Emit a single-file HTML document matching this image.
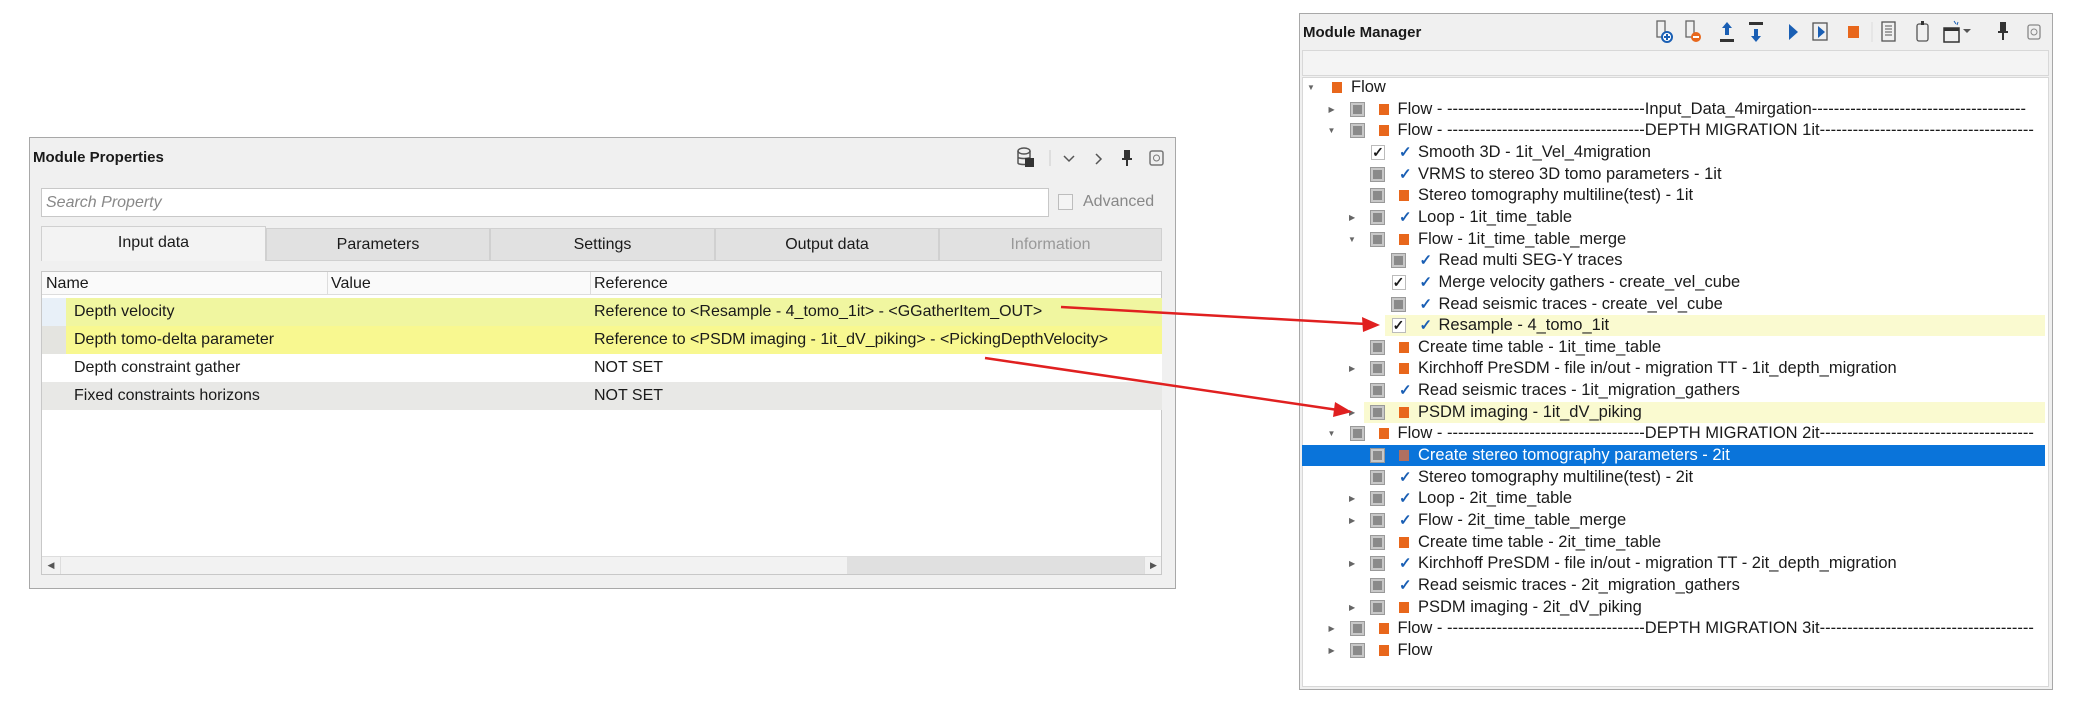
<!DOCTYPE html>
<html><head><meta charset="utf-8"><style>
*{box-sizing:border-box;margin:0;padding:0}
body{width:2076px;height:716px;background:#fff;position:relative;overflow:hidden;font-family:"Liberation Sans",sans-serif;font-size:16px;color:#1a1a1a}
.a{position:absolute}
.panel{background:#f0f0f0;border:1px solid #a8a8a8}
.tab{position:absolute;top:228px;height:33px;background:#e1e1e1;border:1px solid #d0d0d0;text-align:center;line-height:31px;font-size:16px}
.row{position:absolute;left:42px;width:1120px;height:28px;line-height:28px}
.tr{position:absolute;height:21.65px;line-height:21.65px;white-space:nowrap;font-size:16.5px}
.cb{position:absolute;width:13px;height:13px;background:#8a8a8a;border:2px solid #c8c8c8;outline:1px solid #999;top:4px}
.cbk{position:absolute;width:14px;height:15px;background:#fff;border:1px solid #bbb;top:3px;font-size:14px;line-height:13px;text-align:center;font-weight:bold}
.or{position:absolute;width:10px;height:11px;background:#e8671c;top:5px}
.bc{position:absolute;color:#1a5fb4;font-weight:bold;font-size:15px;top:0}
.ex{position:absolute;font-size:8px;color:#666;top:0}
</style></head><body>

<div class="a panel" style="left:29px;top:137px;width:1147px;height:452px"></div>
<div class="a" style="left:33px;top:149px;font-weight:bold;font-size:15px">Module Properties</div>
<svg class="a" style="left:1016px;top:146px" width="170" height="26">
<ellipse cx="8" cy="5" rx="6" ry="3" fill="none" stroke="#555" stroke-width="1.5"/>
<path d="M2 5v12c0 2 12 2 12 0V5M2 11c0 2 12 2 12 0" fill="none" stroke="#555" stroke-width="1.5"/>
<rect x="9" y="12" width="9" height="9" fill="#333"/>
<line x1="34" y1="4" x2="34" y2="20" stroke="#ccc"/>
<path d="M48 10l5 5 5-5" fill="none" stroke="#555" stroke-width="1.5"/>
<path d="M80 8l5 5-5 5" fill="none" stroke="#555" stroke-width="1.5"/>
<path d="M108 4h6v8h2v2h-4v6h-2v-6h-4v-2h2z" fill="#333"/>
<rect x="134" y="5" width="13" height="14" rx="2" fill="none" stroke="#777" stroke-width="1.5"/><circle cx="140.5" cy="12" r="3" fill="none" stroke="#777"/>
</svg>
<div class="a" style="left:41px;top:188px;width:1008px;height:29px;background:#fff;border:1px solid #c8c8c8;padding-left:4px;line-height:27px;font-style:italic;color:#888">Search Property</div>
<div class="a" style="left:1058px;top:194px;width:15px;height:16px;border:1px solid #bdbdbd;background:#f4f4f4"></div>
<div class="a" style="left:1083px;top:193px;color:#888">Advanced</div>
<div class="tab" style="left:41px;width:225px;background:#f3f3f3;border-bottom:none;top:226px;height:35px">Input data</div>
<div class="tab" style="left:266px;width:224px">Parameters</div>
<div class="tab" style="left:490px;width:225px">Settings</div>
<div class="tab" style="left:715px;width:224px">Output data</div>
<div class="tab" style="left:939px;width:223px;color:#999">Information</div>
<div class="a" style="left:41px;top:271px;width:1121px;height:304px;background:#fff;border:1px solid #c8c8c8"></div>
<div class="a" style="left:42px;top:272px;width:1119px;height:23px;background:#fafafa;border-bottom:1px solid #ddd"></div>
<div class="a" style="left:46px;top:275px">Name</div>
<div class="a" style="left:327px;top:272px;width:1px;height:23px;background:#ddd"></div>
<div class="a" style="left:331px;top:275px">Value</div>
<div class="a" style="left:590px;top:272px;width:1px;height:23px;background:#ddd"></div>
<div class="a" style="left:594px;top:275px">Reference</div>
<div class="row" style="top:298px;background:#f0f6a0"><div class="a" style="left:0;top:0;width:24px;height:28px;background:#e8f0f8"></div><span class="a" style="left:32px">Depth velocity</span><span class="a" style="left:552px">Reference to &lt;Resample - 4_tomo_1it&gt; - &lt;GGatherItem_OUT&gt;</span></div>
<div class="row" style="top:326px;background:#f8f890"><div class="a" style="left:0;top:0;width:24px;height:28px;background:#e4e4e0"></div><span class="a" style="left:32px">Depth tomo-delta parameter</span><span class="a" style="left:552px">Reference to &lt;PSDM imaging - 1it_dV_piking&gt; - &lt;PickingDepthVelocity&gt;</span></div>
<div class="row" style="top:354px;background:#fff"><span class="a" style="left:32px">Depth constraint gather</span><span class="a" style="left:552px">NOT SET</span></div>
<div class="row" style="top:382px;background:#e8e8e6"><span class="a" style="left:32px">Fixed constraints horizons</span><span class="a" style="left:552px">NOT SET</span></div>
<div class="a" style="left:42px;top:556px;width:1119px;height:18px;background:#f2f2f2;border-top:1px solid #ddd"></div>
<div class="a" style="left:42px;top:556px;width:19px;height:18px;border-right:1px solid #ddd;font-size:9px;line-height:18px;text-align:center;color:#555">◀</div>
<div class="a" style="left:847px;top:557px;width:297px;height:17px;background:#e0e0e0"></div>
<div class="a" style="left:1144px;top:556px;width:18px;height:18px;border-left:1px solid #ddd;font-size:9px;line-height:18px;text-align:center;color:#555">▶</div>

<div class="a panel" style="left:1299px;top:13px;width:754px;height:677px"></div>
<div class="a" style="left:1303px;top:24px;font-weight:bold;font-size:15px">Module Manager</div>
<svg class="a" style="left:1650px;top:18px" width="400" height="30">
<g fill="none" stroke="#666" stroke-width="1.3"><rect x="7" y="3" width="8" height="16"/><rect x="36" y="3" width="8" height="16"/></g>
<circle cx="17" cy="19" r="5" fill="#fff" stroke="#1a5fb4" stroke-width="2"/><line x1="14" y1="19" x2="20" y2="19" stroke="#1a5fb4" stroke-width="2"/><line x1="17" y1="16" x2="17" y2="22" stroke="#1a5fb4" stroke-width="2"/>
<circle cx="46" cy="19" r="5" fill="#e8671c"/><line x1="43" y1="19" x2="49" y2="19" stroke="#fff" stroke-width="2"/>
<path d="M77 4l-5 6h3v7h4v-7h3z" fill="#1a5fb4"/><rect x="70" y="21" width="14" height="3" fill="#333"/>
<path d="M106 24l-5-6h3v-7h4v7h3z" fill="#1a5fb4"/><rect x="99" y="4" width="14" height="3" fill="#333"/>
<path d="M139 6l9 8-9 8z" fill="#1a5fb4"/>
<rect x="163" y="5" width="14" height="17" fill="none" stroke="#555" stroke-width="1.3"/><path d="M168 8l7 6-7 6z" fill="#1a5fb4"/>
<rect x="198" y="8" width="11" height="12" fill="#e8671c"/>
<line x1="222" y1="4" x2="222" y2="24" stroke="#ddd"/>
<rect x="232" y="4" width="13" height="19" fill="none" stroke="#555" stroke-width="1.3"/><path d="M235 8h7M235 11h7M235 14h7M235 17h7" stroke="#555"/>
<rect x="267" y="6" width="11" height="17" rx="2" fill="none" stroke="#555" stroke-width="1.3"/><rect x="271" y="3" width="3" height="4" fill="#333"/>
<rect x="294" y="10" width="15" height="14" fill="none" stroke="#333" stroke-width="1.5"/><rect x="294" y="10" width="15" height="3" fill="#333"/><path d="M304 3l2 3M308 4l-1 3" stroke="#1a5fb4"/>
<path d="M313 11l4 4 4-4z" fill="#555"/>
<path d="M350 4h6v9h2v2h-4v7h-2v-7h-4v-2h2z" fill="#333"/>
<rect x="378" y="7" width="12" height="14" rx="2" fill="none" stroke="#888" stroke-width="1.3"/><circle cx="384" cy="14" r="3" fill="none" stroke="#888"/>
</svg>
<div class="a" style="left:1302px;top:50px;width:747px;height:26px;background:#f4f4f4;border:1px solid #d8d8d8"></div>
<div class="a" style="left:1302px;top:77px;width:747px;height:610px;background:#fff;border:1px solid #d8d8d8"></div>

<div class="a" style="left:1385px;top:315px;width:660px;height:21px;background:#fafad0"></div>
<div class="a" style="left:1364px;top:402px;width:681px;height:21px;background:#fafad0"></div>
<div class="a" style="left:1302px;top:445px;width:743px;height:21px;background:#0a74da"></div>

<div id="tree"></div>
<script>
var A='------------------------------------', B='---------------------------------------';
var rows=[
[0,'d','n','o','Flow'],
[1,'r','g','o','Flow - '+A+'Input_Data_4mirgation'+B],
[1,'d','g','o','Flow - '+A+'DEPTH MIGRATION 1it'+B],
[2,'','k','b','Smooth 3D - 1it_Vel_4migration'],
[2,'','g','b','VRMS to stereo  3D tomo parameters - 1it'],
[2,'','g','o','Stereo tomography multiline(test) - 1it'],
[2,'r','g','b','Loop - 1it_time_table'],
[2,'d','g','o','Flow - 1it_time_table_merge'],
[3,'','g','b','Read multi SEG-Y traces'],
[3,'','k','b','Merge velocity gathers - create_vel_cube'],
[3,'','g','b','Read seismic traces - create_vel_cube'],
[3,'','k','b','Resample - 4_tomo_1it'],
[2,'','g','o','Create time table - 1it_time_table'],
[2,'r','g','o','Kirchhoff PreSDM - file in/out - migration TT - 1it_depth_migration'],
[2,'','g','b','Read seismic traces - 1it_migration_gathers'],
[2,'r','g','o','PSDM imaging - 1it_dV_piking'],
[1,'d','g','o','Flow - '+A+'DEPTH MIGRATION 2it'+B],
[2,'','g','o','Create stereo tomography parameters - 2it'],
[2,'','g','b','Stereo tomography multiline(test) - 2it'],
[2,'r','g','b','Loop - 2it_time_table'],
[2,'r','g','b','Flow - 2it_time_table_merge'],
[2,'','g','o','Create time table - 2it_time_table'],
[2,'r','g','b','Kirchhoff PreSDM - file in/out - migration TT - 2it_depth_migration'],
[2,'','g','b','Read seismic traces - 2it_migration_gathers'],
[2,'r','g','o','PSDM imaging - 2it_dV_piking'],
[1,'r','g','o','Flow - '+A+'DEPTH MIGRATION 3it'+B],
[1,'r','g','o','Flow']];
var h='';
rows.forEach(function(r,i){
 var y=77+i*21.65, L=r[0], base=1311+(L)*20.5, sel=(i==17);
 h+='<div class="tr" style="left:0;top:'+y+'px;width:2036px;overflow:hidden'+(sel?';color:#fff':'')+'">';
 if(r[1]=='d')h+='<span class="ex" style="left:'+(base-4)+'px">▼</span>';
 if(r[1]=='r')h+='<span class="ex" style="left:'+(base-3)+'px">▶</span>';
 var cx=base+23, ix;
 if(L==0){ix=base+21;}
 else{ if(r[2]=='g')h+='<div class="cb" style="left:'+(cx-4)+'px"></div>'; else h+='<div class="cbk" style="left:'+(cx-4)+'px">✓</div>'; ix=cx+24;}
 if(r[3]=='o')h+='<div class="or" style="left:'+ix+'px'+(sel?';background:#b07060':'')+'"></div>';
 else h+='<span class="bc" style="left:'+ix+'px">✓</span>';
 h+='<span class="a" style="left:'+(ix+19)+'px">'+r[4].replace(/</g,'&lt;')+'</span></div>';
});
document.getElementById('tree').innerHTML=h;
</script>

<svg class="a" style="left:0;top:0" width="2076" height="716">
<g stroke="#e02020" stroke-width="2.5" fill="#e02020">
<line x1="1061" y1="307" x2="1366" y2="324"/>
<path d="M1380 325l-18-8 1 15z" stroke="none"/>
<line x1="985" y1="358" x2="1338" y2="410"/>
<path d="M1352 412l-17-10-2 15z" stroke="none"/>
</g>
</svg>
</body></html>
